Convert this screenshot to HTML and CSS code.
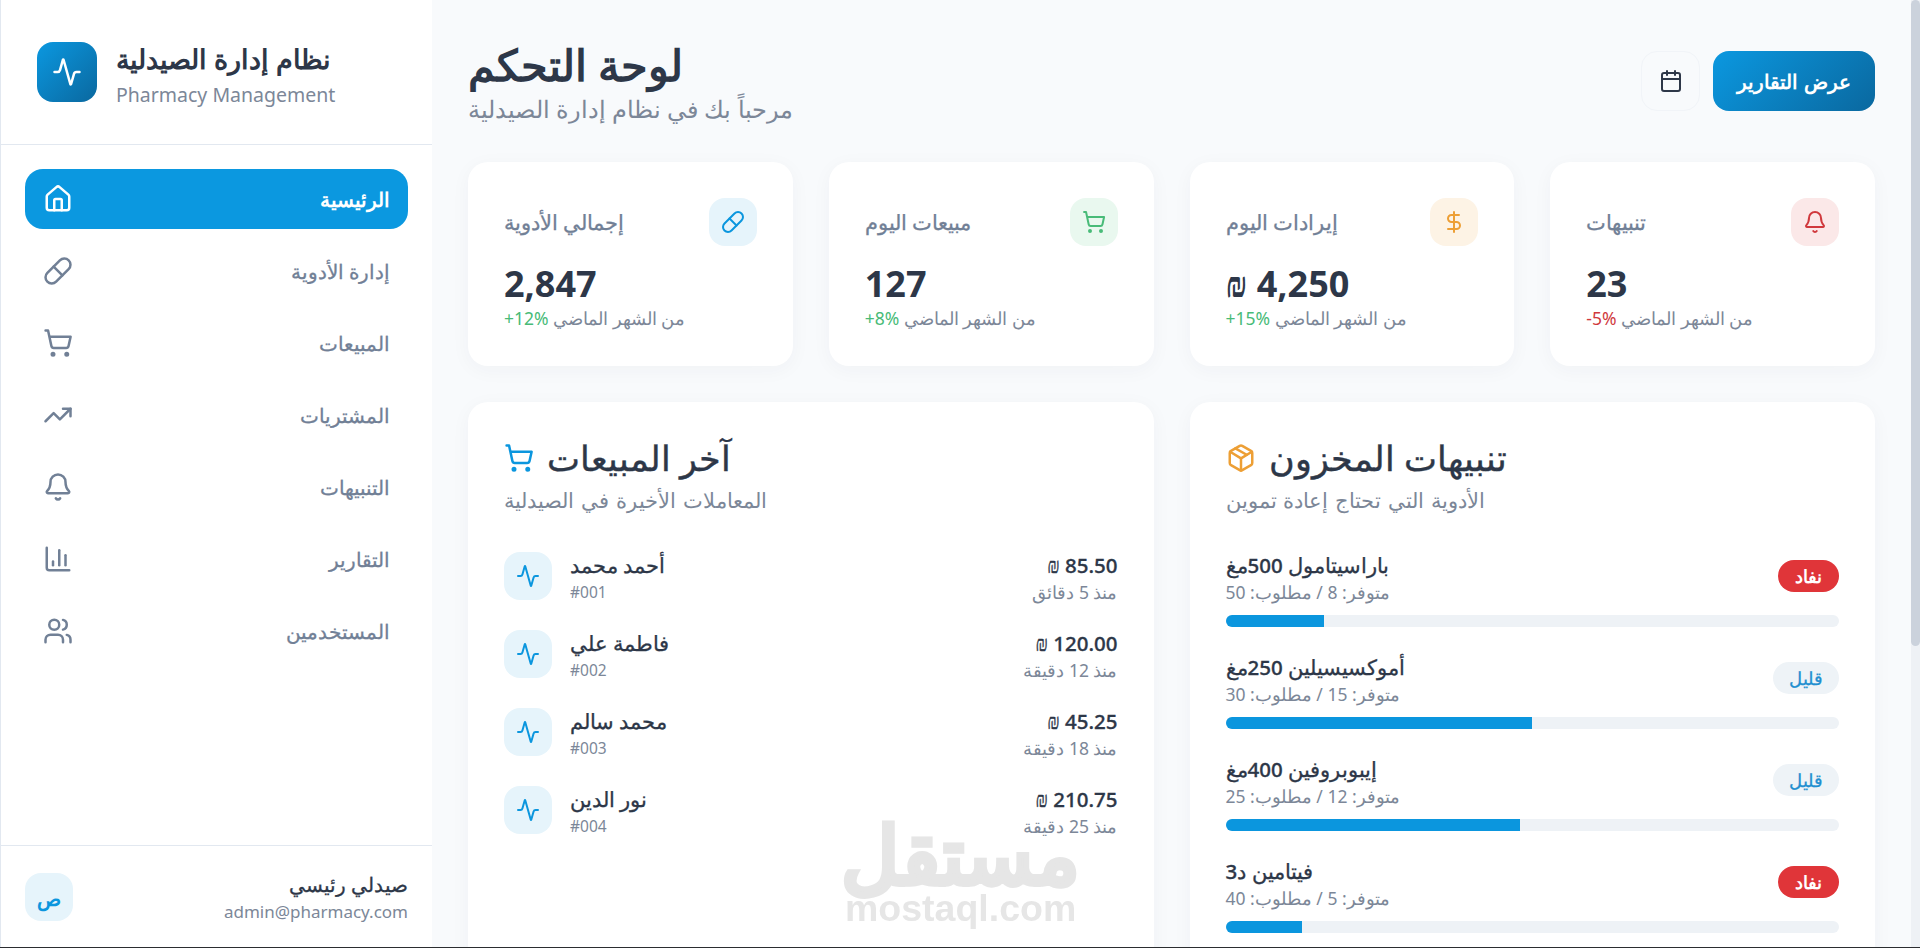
FILE: index.html
```html
<!DOCTYPE html>
<html lang="ar">
<head>
<meta charset="utf-8">
<title>نظام إدارة الصيدلية</title>
<link rel="stylesheet" href="styles.css">
</head>
<body>
<svg class="sprite" xmlns="http://www.w3.org/2000/svg">
  <symbol id="i-activity" viewBox="0 0 24 24"><path d="M22 12h-2.48a2 2 0 0 0-1.93 1.46l-2.35 8.36a.25.25 0 0 1-.48 0L9.24 2.18a.25.25 0 0 0-.48 0l-2.35 8.36A2 2 0 0 1 4.49 12H2"/></symbol>
  <symbol id="i-home" viewBox="0 0 24 24"><path d="M15 21v-8a1 1 0 0 0-1-1h-4a1 1 0 0 0-1 1v8"/><path d="M3 10a2 2 0 0 1 .709-1.528l7-5.999a2 2 0 0 1 2.582 0l7 5.999A2 2 0 0 1 21 10v9a2 2 0 0 1-2 2H5a2 2 0 0 1-2-2z"/></symbol>
  <symbol id="i-pill" viewBox="0 0 24 24"><path d="m10.5 20.5 10-10a4.95 4.95 0 1 0-7-7l-10 10a4.95 4.95 0 1 0 7 7Z"/><path d="m8.5 8.5 7 7"/></symbol>
  <symbol id="i-cart" viewBox="0 0 24 24"><circle cx="8" cy="21" r="1"/><circle cx="19" cy="21" r="1"/><path d="M2.05 2.05h2l2.66 12.42a2 2 0 0 0 2 1.58h9.78a2 2 0 0 0 1.95-1.57l1.65-7.43H5.12"/></symbol>
  <symbol id="i-trend" viewBox="0 0 24 24"><path d="M16 7h6v6"/><path d="m22 7-8.5 8.5-5-5L2 17"/></symbol>
  <symbol id="i-bell" viewBox="0 0 24 24"><path d="M10.268 21a2 2 0 0 0 3.464 0"/><path d="M3.262 15.326A1 1 0 0 0 4 17h16a1 1 0 0 0 .74-1.673C19.41 13.956 18 12.499 18 8A6 6 0 0 0 6 8c0 4.499-1.411 5.956-2.738 7.326"/></symbol>
  <symbol id="i-chart" viewBox="0 0 24 24"><path d="M3 3v16a2 2 0 0 0 2 2h16"/><path d="M18 17V9"/><path d="M13 17V5"/><path d="M8 17v-3"/></symbol>
  <symbol id="i-users" viewBox="0 0 24 24"><path d="M16 21v-2a4 4 0 0 0-4-4H6a4 4 0 0 0-4 4v2"/><circle cx="9" cy="7" r="4"/><path d="M22 21v-2a4 4 0 0 0-3-3.87"/><path d="M16 3.13a4 4 0 0 1 0 7.75"/></symbol>
  <symbol id="i-calendar" viewBox="0 0 24 24"><path d="M8 2v4"/><path d="M16 2v4"/><rect x="3" y="4" width="18" height="18" rx="2"/><path d="M3 10h18"/></symbol>
  <symbol id="i-dollar" viewBox="0 0 24 24"><path d="M12 2v20"/><path d="M17 5H9.5a3.5 3.5 0 0 0 0 7h5a3.5 3.5 0 0 1 0 7H6"/></symbol>
  <symbol id="i-package" viewBox="0 0 24 24"><path d="M11 21.73a2 2 0 0 0 2 0l7-4A2 2 0 0 0 21 16V8a2 2 0 0 0-1-1.73l-7-4a2 2 0 0 0-2 0l-7 4A2 2 0 0 0 3 8v8a2 2 0 0 0 1 1.73z"/><path d="M12 22V12"/><path d="m3.3 7 7.703 4.734a2 2 0 0 0 1.994 0L20.7 7"/><path d="m7.5 4.27 9 5.15"/></symbol>
</svg>

<div class="app">
  <aside class="sidebar">
    <div class="brand">
      <div class="brand-logo"><svg class="icon icon-30"><use href="#i-activity"/></svg></div>
      <div class="brand-text">
        <div class="brand-name" dir="rtl">نظام إدارة الصيدلية</div>
        <div class="brand-sub">Pharmacy Management</div>
      </div>
    </div>
    <nav class="nav">
      <a class="nav-item active"><svg class="icon icon-30"><use href="#i-home"/></svg><span dir="rtl">الرئيسية</span></a>
      <a class="nav-item"><svg class="icon icon-30"><use href="#i-pill"/></svg><span dir="rtl">إدارة الأدوية</span></a>
      <a class="nav-item"><svg class="icon icon-30"><use href="#i-cart"/></svg><span dir="rtl">المبيعات</span></a>
      <a class="nav-item"><svg class="icon icon-30"><use href="#i-trend"/></svg><span dir="rtl">المشتريات</span></a>
      <a class="nav-item"><svg class="icon icon-30"><use href="#i-bell"/></svg><span dir="rtl">التنبيهات</span></a>
      <a class="nav-item"><svg class="icon icon-30"><use href="#i-chart"/></svg><span dir="rtl">التقارير</span></a>
      <a class="nav-item"><svg class="icon icon-30"><use href="#i-users"/></svg><span dir="rtl">المستخدمين</span></a>
    </nav>
    <div class="user">
      <div class="user-avatar">ص</div>
      <div class="user-text">
        <div class="user-name" dir="rtl">صيدلي رئيسي</div>
        <div class="user-mail">admin@pharmacy.com</div>
      </div>
    </div>
  </aside>

  <main class="main">
    <header class="page-head">
      <div class="page-title">
        <h1 dir="rtl">لوحة التحكم</h1>
        <p dir="rtl">مرحباً بك في نظام إدارة الصيدلية</p>
      </div>
      <div class="page-actions">
        <button class="btn-icon"><svg class="icon icon-24"><use href="#i-calendar"/></svg></button>
        <button class="btn-primary" dir="rtl">عرض التقارير</button>
      </div>
    </header>

    <section class="stats">
      <article class="stat">
        <div class="stat-top"><span class="stat-label" dir="rtl">إجمالي الأدوية</span><span class="stat-icon tone-blue"><svg class="icon icon-24"><use href="#i-pill"/></svg></span></div>
        <div class="stat-value">2,847</div>
        <div class="stat-sub"><span class="up" dir="ltr">+12%</span> <span dir="rtl">من الشهر الماضي</span></div>
      </article>
      <article class="stat">
        <div class="stat-top"><span class="stat-label" dir="rtl">مبيعات اليوم</span><span class="stat-icon tone-green"><svg class="icon icon-24"><use href="#i-cart"/></svg></span></div>
        <div class="stat-value">127</div>
        <div class="stat-sub"><span class="up" dir="ltr">+8%</span> <span dir="rtl">من الشهر الماضي</span></div>
      </article>
      <article class="stat">
        <div class="stat-top"><span class="stat-label" dir="rtl">إيرادات اليوم</span><span class="stat-icon tone-orange"><svg class="icon icon-24"><use href="#i-dollar"/></svg></span></div>
        <div class="stat-value"><span class="shekel">₪</span> 4,250</div>
        <div class="stat-sub"><span class="up" dir="ltr">+15%</span> <span dir="rtl">من الشهر الماضي</span></div>
      </article>
      <article class="stat">
        <div class="stat-top"><span class="stat-label" dir="rtl">تنبيهات</span><span class="stat-icon tone-red"><svg class="icon icon-24"><use href="#i-bell"/></svg></span></div>
        <div class="stat-value">23</div>
        <div class="stat-sub"><span class="down" dir="ltr">-5%</span> <span dir="rtl">من الشهر الماضي</span></div>
      </article>
    </section>

    <section class="panels">
      <article class="panel">
        <h2 class="panel-title"><svg class="icon icon-30 c-blue"><use href="#i-cart"/></svg><span dir="rtl">آخر المبيعات</span></h2>
        <p class="panel-sub" dir="rtl">المعاملات الأخيرة في الصيدلية</p>
        <div class="sales">
          <div class="sale"><span class="sale-icon"><svg class="icon icon-24"><use href="#i-activity"/></svg></span><div class="sale-who"><div class="row-name" dir="rtl">أحمد محمد</div><div class="row-code">#001</div></div><div class="sale-amount"><div class="row-name"><span class="shekel">₪</span> 85.50</div><div class="row-sub" dir="rtl">منذ 5 دقائق</div></div></div>
          <div class="sale"><span class="sale-icon"><svg class="icon icon-24"><use href="#i-activity"/></svg></span><div class="sale-who"><div class="row-name" dir="rtl">فاطمة علي</div><div class="row-code">#002</div></div><div class="sale-amount"><div class="row-name"><span class="shekel">₪</span> 120.00</div><div class="row-sub" dir="rtl">منذ 12 دقيقة</div></div></div>
          <div class="sale"><span class="sale-icon"><svg class="icon icon-24"><use href="#i-activity"/></svg></span><div class="sale-who"><div class="row-name" dir="rtl">محمد سالم</div><div class="row-code">#003</div></div><div class="sale-amount"><div class="row-name"><span class="shekel">₪</span> 45.25</div><div class="row-sub" dir="rtl">منذ 18 دقيقة</div></div></div>
          <div class="sale"><span class="sale-icon"><svg class="icon icon-24"><use href="#i-activity"/></svg></span><div class="sale-who"><div class="row-name" dir="rtl">نور الدين</div><div class="row-code">#004</div></div><div class="sale-amount"><div class="row-name"><span class="shekel">₪</span> 210.75</div><div class="row-sub" dir="rtl">منذ 25 دقيقة</div></div></div>
        </div>
      </article>
      <article class="panel">
        <h2 class="panel-title"><svg class="icon icon-30 c-orange"><use href="#i-package"/></svg><span dir="rtl">تنبيهات المخزون</span></h2>
        <p class="panel-sub" dir="rtl">الأدوية التي تحتاج إعادة تموين</p>
        <div class="stock">
          <div class="stock-item"><div class="stock-row"><div><div class="row-name" dir="rtl">باراسيتامول 500مغ</div><div class="row-sub" dir="rtl">متوفر: 8 / مطلوب: 50</div></div><span class="badge badge-out" dir="rtl">نفاد</span></div><div class="bar"><div class="bar-fill" style="width:16%"></div></div></div>
          <div class="stock-item"><div class="stock-row"><div><div class="row-name" dir="rtl">أموكسيسيلين 250مغ</div><div class="row-sub" dir="rtl">متوفر: 15 / مطلوب: 30</div></div><span class="badge badge-low" dir="rtl">قليل</span></div><div class="bar"><div class="bar-fill" style="width:50%"></div></div></div>
          <div class="stock-item"><div class="stock-row"><div><div class="row-name" dir="rtl">إيبوبروفين 400مغ</div><div class="row-sub" dir="rtl">متوفر: 12 / مطلوب: 25</div></div><span class="badge badge-low" dir="rtl">قليل</span></div><div class="bar"><div class="bar-fill" style="width:48%"></div></div></div>
          <div class="stock-item"><div class="stock-row"><div><div class="row-name" dir="rtl">فيتامين د3</div><div class="row-sub" dir="rtl">متوفر: 5 / مطلوب: 40</div></div><span class="badge badge-out" dir="rtl">نفاد</span></div><div class="bar"><div class="bar-fill" style="width:12.5%"></div></div></div>
        </div>
      </article>
    </section>
  </main>
  <div class="scrollbar"><div class="scrollbar-thumb"></div></div>
</div>

<div class="watermark">
  <div class="wm-ar" dir="rtl">مستقل</div>
  <div class="wm-en">mostaql.com</div>
</div>
</body>
</html>
```

FILE: styles.css
```css
* { box-sizing: border-box; }
html, body { margin: 0; height: 100%; background: #2b2d30; overflow: hidden; }
body { font-family: "Noto Sans", "Open Sans", sans-serif; color: #2d3748; }
.sprite { display: none; }
.icon { fill: none; stroke: currentColor; stroke-width: 2; stroke-linecap: round; stroke-linejoin: round; flex: none; display: block; }
.icon-30 { width: 30px; height: 30px; }
.icon-24 { width: 24px; height: 24px; }
.c-blue { color: #0b96de; }
.c-orange { color: #ed9f35; }
.shekel { font-family: "Liberation Serif"; line-height: 0; }

.app { display: flex; height: calc(100vh - 1px); background: #f8fafc; }

.sidebar { width: 432px; flex: none; display: flex; flex-direction: column; background: #fff; border-left: 1px solid #e2e8f0; }
.brand { height: 145px; flex: none; display: flex; align-items: center; gap: 19px; padding: 0 36px; border-bottom: 1px solid #e2e8f0; }
.brand-logo { width: 60px; height: 60px; flex: none; border-radius: 16px; display: flex; align-items: center; justify-content: center; color: #fff; background: linear-gradient(135deg, #0b98e0, #0a689f); }
.brand-text { flex: 1; }
.brand-name { font-size: 26.5px; font-weight: 600; line-height: 46px; text-align: left; }
.brand-sub { font-size: 19.5px; line-height: 26px; color: #7c8798; }
.nav { flex: 1; display: flex; flex-direction: column; gap: 12px; padding: 24px 24px 0; }
.nav-item { height: 60px; padding: 0 18px; border-radius: 18px; display: flex; align-items: center; justify-content: space-between; color: #718096; font-size: 20px; font-weight: 500; -webkit-text-stroke: .3px currentColor; }
.nav-item.active { background: #0b98e0; color: #fff; font-size: 19.7px; font-weight: 600; -webkit-text-stroke: 0; }
.user { height: 102px; flex: none; display: flex; align-items: center; justify-content: space-between; padding: 0 24px; border-top: 1px solid #e2e8f0; }
.user-avatar { width: 48px; height: 48px; padding-top: 3px; border-radius: 16px; display: flex; align-items: center; justify-content: center; background: #e6f4fb; color: #0b96de; font-size: 20px; font-weight: 600; }
.user-text { padding-top: 3px; text-align: right; }
.user-name { font-size: 20px; font-weight: 500; line-height: 28px; -webkit-text-stroke: .3px currentColor; }
.user-mail { font-size: 17px; line-height: 26px; color: #7c8798; }

.main { flex: 1; min-width: 0; overflow: hidden; padding: 36px; }
.scrollbar { width: 9px; flex: none; background: #eef1f5; }
.scrollbar-thumb { height: 646px; background: #cbd2dc; border-radius: 5px; }

.page-head { height: 90px; display: flex; align-items: center; justify-content: space-between; }
.page-title { padding-bottom: 2px; }
.page-title h1 { margin: 0; font-size: 43px; font-weight: 700; line-height: 58px; text-align: left; }
.page-title p { margin: 0; font-size: 23.5px; line-height: 30px; color: #7c8798; text-align: left; }
.page-actions { display: flex; align-items: center; gap: 13px; }
.btn-icon { width: 59px; height: 60px; border: 1px solid #f1f4f8; border-radius: 16px; background: #f8fafc; color: #2d3748; display: flex; align-items: center; justify-content: center; padding: 0; }
.btn-primary { width: 162px; height: 60px; border: 0; border-radius: 16px; color: #fff; font: 600 20px "Noto Sans", "Open Sans", sans-serif; background: linear-gradient(135deg, #0b98e0, #0a689f); }

.stats { display: grid; grid-template-columns: repeat(4, 1fr); gap: 36px; margin-top: 36px; }
.stat { height: 204px; padding: 36px; background: #fff; border-radius: 20px; box-shadow: 0 4px 20px rgba(45, 55, 72, .04); }
.stat-top { display: flex; align-items: center; justify-content: space-between; height: 48px; }
.stat-label { font-size: 21px; font-weight: 500; color: #718096; -webkit-text-stroke: .3px currentColor; }
.stat-icon { width: 48px; height: 48px; border-radius: 16px; display: flex; align-items: center; justify-content: center; }
.tone-blue { background: #e6f4fb; color: #0b96de; }
.tone-green { background: #e9f8ef; color: #48bb78; }
.tone-orange { background: #fdf3e5; color: #ed9f35; }
.tone-red { background: #fbe8e8; color: #d0393d; }
.stat-value { font-size: 36px; font-weight: 700; line-height: 46px; margin-top: 15px; }
.stat-sub { margin-top: -1px; font-size: 17.5px; line-height: 24px; color: #7c8798; }
.up { color: #48bb78; }
.down { color: #d0393d; }

.panels { display: grid; grid-template-columns: repeat(2, 1fr); gap: 36px; margin-top: 36px; }
.panel { background: #fff; border-radius: 20px; padding: 36px; box-shadow: 0 4px 20px rgba(45, 55, 72, .04); }
.panel-title { margin: -2px 0 0; display: flex; align-items: center; gap: 13px; font-size: 35px; font-weight: 500; line-height: 44px; -webkit-text-stroke: .4px currentColor; }
.panel-sub { margin: 2px 0 0; width: fit-content; font-size: 21px; word-spacing: 1.5px; line-height: 36px; color: #7c8798; }

.sales { display: flex; flex-direction: column; gap: 25px; margin-top: 34px; }
.sale { display: flex; align-items: flex-start; gap: 18px; }
.sale-icon { width: 48px; height: 48px; border-radius: 16px; display: flex; align-items: center; justify-content: center; flex: none; background: #e6f4fb; color: #0b96de; }
.sale-who { flex: 1; margin-top: -1px; }
.sale-who .row-name { width: fit-content; }
.sale-amount { text-align: right; margin-top: -1px; }
.row-name { font-size: 20.5px; font-weight: 500; line-height: 28px; -webkit-text-stroke: .3px currentColor; }
.row-sub { font-size: 17.5px; line-height: 26px; color: #7c8798; }
.row-code { font-size: 15.5px; line-height: 26px; color: #7c8798; }
.stock-row .row-name, .stock-row .row-sub { text-align: left; }

.stock { display: flex; flex-direction: column; gap: 26px; margin-top: 33px; }
.stock-row { display: flex; align-items: flex-start; justify-content: space-between; }
.badge { height: 32px; margin-top: 9px; padding: 0 17px; border-radius: 16px; font-size: 17.5px; font-weight: 600; display: flex; align-items: center; }
.badge-out { background: #e03539; color: #fff; }
.badge-low { padding: 0 16px; background: #eef3f7; color: #1f8fd0; font-weight: 500; -webkit-text-stroke: .3px currentColor; }
.bar { height: 12px; margin-top: 10px; border-radius: 6px; background: #eef2f6; overflow: hidden; }
.bar-fill { height: 100%; background: #0b96de; }

.watermark { position: fixed; left: 845px; top: 820px; width: 230px; text-align: center; color: #e6e6e6; pointer-events: none; }
.wm-ar { font: 700 80px/66px "Noto Sans", "Open Sans", sans-serif; -webkit-text-stroke: 3px #e6e6e6; white-space: nowrap; transform: translateX(5px); }
.wm-en { margin-top: 5px; font: 700 37.5px/34px "Liberation Sans", sans-serif; }
```
